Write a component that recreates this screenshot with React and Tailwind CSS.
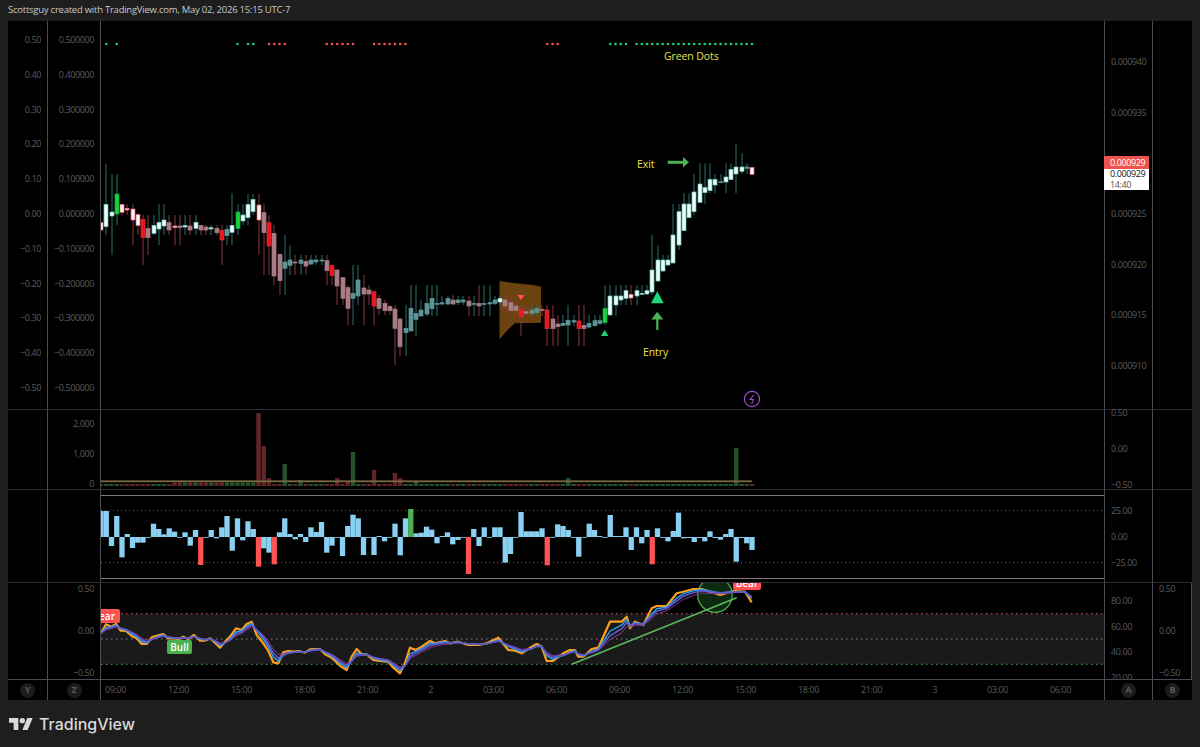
import React from 'react';

const FONT = { fontFamily: '"Open Sans", "Liberation Sans", sans-serif' };

// kind, body top, body bottom, wick top, wick bottom (3x crop coords, converted below)
const SEG_A = [
  ['p',188,210,188,210],['w',133,200,12,225],['w',156,168,42,285],['g',102,162,42,195],['p',133,157,133,165],
  ['p',145,150,133,165],['p',147,180,133,255],['p',163,197,163,225],['r',178,233,165,315],['m',205,233,165,285],
  ['w',196,220,165,225],['w',187,207,133,255],['w',180,198,133,225],['m',188,210,165,225],['p',198,203,165,255],
  ['m',198,203,165,255],['w',196,201,165,225],['m',198,210,165,225],['w',187,205,165,225],['m',196,210,195,225],
  ['m',201,210,195,225],['w',203,207,195,225],['m',205,218,195,225],['r',211,240,195,315],['t',208,227,195,255],
  ['w',196,217,100,255],['g',156,205,133,225],['w',165,183,133,195],['w',133,173,102,195],['w',118,155,102,165],
  ['p',135,180,102,285],['m',158,218,133,345],['r',188,258,165,345],['m',220,348,195,375],['m',283,362,283,405],
  ['t',306,325,225,405],['t',300,316,255,345],['m',306,309,285,345],['t',300,310,285,345],['m',304,318,285,345],
  ['t',300,312,285,315],['t',300,306,285,315],['t',300,303,285,315],['m',302,332,285,375],['r',316,347,316,375],
  ['m',330,378,330,435],['m',353,415,353,435],['m',383,445,375,495],['t',400,415,315,495],['t',360,408,315,435],
  ['m',384,402,345,495],['m',390,402,375,435],['r',395,438,395,495],['m',416,445,405,465],['m',430,452,420,465],
  ['m',440,452,435,465],['m',447,505,435,615],
];
const SEG_B = [
  ['m',207,290,207,318],['t',235,248,165,318],['t',175,243,105,243],['t',190,208,105,258],['t',180,198,150,198],
  ['t',160,192,105,198],['t',145,176,105,198],['t',160,162,105,198],['t',158,162,138,165],['t',145,162,138,165],
  ['m',150,162,135,165],['t',150,158,138,165],['t',150,156,138,165],['m',153,168,138,198],['t',160,162,138,198],
  ['m',160,168,105,198],['t',160,162,105,198],['t',158,162,105,198],['t',150,160,138,165],['w',145,156,138,165],
  ['m',150,168,138,198],['m',158,182,138,198],['m',168,182,150,198],['r',178,200,165,258],['m',185,190,165,198],
  ['t',180,190,165,198],['t',175,188,165,198],['m',178,180,165,198],['r',180,236,165,288],['m',207,236,165,288],
  ['m',222,230,195,288],['t',220,226,195,228],['t',211,225,165,288],['t',212,216,195,228],['r',213,236,165,288],
  ['m',226,236,165,288],['t',220,231,195,235],['t',212,227,195,230],['t',212,220,195,225],['g',175,218,105,225],
  ['w',138,195,105,195],['w',138,165,105,198],['w',138,150,105,165],['w',122,145,105,165],['p',133,144,105,165],
  ['w',122,138,105,165],['w',130,132,105,135],['w',122,132,105,135],
];
const SEG_C = [
  ['w',720,786,615,795],['w',690,753,645,756],['w',690,723,675,726],['w',690,705,675,708],['w',615,699,522,699],
  ['w',545,645,522,660],['w',522,602,490,602],['w',522,563,490,563],['w',486,545,432,555],['w',462,517,400,517],
  ['w',472,488,400,522],['w',448,482,400,490],['w',448,465,432,490],['t',455,458,432,460],['w',441,456,400,490],
  ['w',418,449,400,449],['w',411,432,340,490],['w',411,424,370,432],['t',411,415,400,432],['p',412,433,412,433],
];
const toAbs = (seg, off) => seg.map(([k, a, b, c, d]) => [k, a / 3 + off, b / 3 + off, c / 3 + off, d / 3 + off]);
const CANDLES = [...toAbs(SEG_A, 160), ...toAbs(SEG_B, 250), ...toAbs(SEG_C, 30)];

const candleX = (i) => 101 + 5.25 * i;

const BODY = {
  w: 'fill-[#eafffa] stroke-[#6fc0b0]',
  p: 'fill-[#fff5f5] stroke-[#e0606c]',
  r: 'fill-[#f2121c] stroke-[#c8343c]',
  g: 'fill-[#17d43c] stroke-[#17a83c]',
  m: 'fill-[#a87c84] stroke-[#a87c84]',
  t: 'fill-[#5c9498] stroke-[#5c9498]',
};

const GREEN_DOTS = [1, 3, 26, 28, 29, 97, 98, 99, 100];
for (let i = 102; i <= 124; i++) GREEN_DOTS.push(i);
const RED_DOTS = [32, 33, 34, 35, 43, 44, 45, 46, 47, 48, 52, 53, 54, 55, 56, 57, 58, 85, 86, 87];

const VOL_BIG = {
  30: 413, 31: 446, 32: 478, 35: 464, 38: 480, 45: 478, 47: 481, 48: 452, 52: 470, 56: 473, 57: 478,
  60: 481, 89: 478, 121: 448,
};

const OSC = [
  333,333,438,348,472,402,444,428,428,411,371,387,403,385,395,411,397,437,390,495,411,390,415,382,348,452,355,421,364,387,
  500,445,458,493,397,355,402,418,402,426,382,396,366,458,437,411,468,378,344,355,465,411,465,408,424,411,371,466,355,327,
  400,398,380,389,430,408,397,433,420,411,522,387,438,382,411,382,382,488,462,411,336,394,394,394,385,496,411,373,378,390,
  411,470,411,371,390,408,411,345,408,408,382,450,382,430,390,493,385,411,424,393,338,415,414,426,414,424,394,414,419,402,
  387,485,414,430,450,
];
const OSC_RED = [19, 30, 33, 70, 85, 105];
const OSC_GREEN = [59];

const ORANGE_A = [
  [303,175],[318,148],[333,155],[348,147],[362,167],[378,168],[395,183],[410,190],[425,207],[440,207],[455,187],[470,182],
  [490,177],[505,190],[520,190],[536,192],[550,185],[565,192],[582,180],[600,197],[615,197],[630,190],[645,203],[660,218],
  [675,200],[690,185],[708,160],[725,165],[740,147],[755,140],[770,180],[790,205],[805,228],[820,262],[835,265],[850,232],
  [865,228],[880,230],[897,228],[915,233],[930,223],[945,222],[960,222],[975,238],[990,245],[1005,257],[1020,272],[1040,285],
  [1055,245],[1070,222],[1085,238],[1100,238],[1120,255],[1140,258],[1165,260],[1180,278],
];
const ORANGE_B = [
  [0,295],[15,265],[30,218],[47,225],[65,215],[90,198],[105,205],[135,198],[150,205],[175,200],[205,210],[235,210],[260,205],
  [295,188],[325,225],[345,227],[365,235],[395,215],[410,207],[425,215],[440,258],[458,258],[490,235],[510,225],[525,225],
  [535,245],[550,245],[575,222],[595,218],[630,140],[665,140],[680,125],[690,160],[705,140],[730,150],[755,100],[770,93],
  [800,93],[830,55],[850,50],[880,42],[905,42],[960,60],[1000,48],[1035,50],[1055,82],
];
const ORANGE = [
  ...ORANGE_A.map(([x, y]) => [x / 3, y / 3 + 575]),
  ...ORANGE_B.map(([x, y]) => [x / 3 + 400, y / 3 + 575]),
];

const ema = (pts, a) => {
  let prev = pts[0][1];
  return pts.map(([x, y]) => {
    prev = prev + a * (y - prev);
    return [x, prev];
  });
};
const toLine = (pts) => pts.map(([x, y]) => `${x.toFixed(1)},${y.toFixed(1)}`).join(' ');

const TIMES = ['09:00', '12:00', '15:00', '18:00', '21:00', '2', '03:00', '06:00', '09:00', '12:00', '15:00', '18:00', '21:00', '3', '03:00', '06:00'];

const Row = ({ className, cols }) => (
  <div className={`grid grid-cols-[40px_53px_1004px_48px_39px] border-b ${className}`}>
    {cols}
  </div>
);

const Toggle = ({ label }) => (
  <span className="flex h-[15px] w-[15px] items-center justify-center rounded-full bg-[#1c1c1c] text-[9px] font-bold text-[#5a5a5a]">
    {label}
  </span>
);

const MainChart = () => (
  <svg viewBox="101 21 1003 388" className="block h-[388px] w-[1003px]">
    <polygon points="499.5,281 513,283 533,285 541,286.7 541,322.7 515,323.3 508.3,329.3 499.5,339.3" className="fill-[#6b430f]" />
    {GREEN_DOTS.map((i) => (
      <circle key={`g${i}`} cx={candleX(i)} cy={44} r={1.3} className="fill-[#1fce7c]" />
    ))}
    {RED_DOTS.map((i) => (
      <circle key={`r${i}`} cx={candleX(i)} cy={44} r={1.3} className="fill-[#f0525a]" />
    ))}
    {CANDLES.map(([k, top, bot, wt, wb], i) => {
      const up = k === 'w' || k === 't' || k === 'g';
      const x = Math.round(candleX(i));
      return (
        <g key={i}>
          <rect x={x - 0.5} y={wt} width={1} height={wb - wt} className={up ? 'fill-[#27706a]' : 'fill-[#8a3640]'} />
          <rect x={x - 2} y={top} width={4} height={Math.max(bot - top, 1)} strokeWidth={0.7} className={BODY[k]} />
        </g>
      );
    })}
    <polygon points="517.3,295 524.7,295 521,300" className="fill-[#ff5252]" />
    <polygon points="604.6,330 601,336 608.3,336" className="fill-[#1ed67f]" />
    <polygon points="657.3,291.3 651,303.3 663.7,303.3" className="fill-[#1ed67f]" />
    <path d="M657.3 330V315M653.5 318.5l3.8-5 3.8 5z" fill="#4caf50" stroke="#4caf50" strokeWidth="2.2" />
    <path d="M667.7 162.3H684" fill="none" stroke="#4caf50" strokeWidth="3" />
    <path d="M683 157l6 5.3-6 5.3z" fill="#4caf50" />
    <circle cx="752" cy="399" r="7.6" fill="none" stroke="#9c4dcc" strokeWidth="1.2" />
    <path d="M754 394.5l-3.8 5h3.4l-2 4.2" fill="none" stroke="#9c4dcc" strokeWidth="1.1" />
  </svg>
);

const VolumeChart = () => (
  <svg viewBox="101 410 1003 79" className="block h-[79px] w-[1003px]">
    {CANDLES.map(([k], i) => {
      const up = k === 'w' || k === 't' || k === 'g';
      const top = VOL_BIG[i] ?? (i >= 14 && i <= 29 ? 482.5 : 484);
      return (
        <rect key={i} x={candleX(i) - 2.2} y={top} width={4.4} height={486 - top} className={up ? 'fill-[#24502a]' : 'fill-[#622526]'} />
      );
    })}
    <rect x="101" y="480.4" width="651" height="1.8" className="fill-[#7a6a42]" />
  </svg>
);

const OscChart = () => (
  <svg viewBox="101 490 1003 92" className="block h-[92px] w-[1003px]">
    <rect x="101" y="495" width="1003" height="1" className="fill-[#7d7d7d]" />
    <rect x="101" y="578" width="1003" height="1" className="fill-[#7d7d7d]" />
    <line x1="101" x2="1104" y1="510.7" y2="510.7" stroke="#6c6c6c" strokeDasharray="1 3" />
    <line x1="101" x2="1104" y1="562.7" y2="562.7" stroke="#6c6c6c" strokeDasharray="1 3" />
    {OSC.map((v, i) => {
      const y = v / 3 + 400;
      const zero = 537;
      const fill = OSC_RED.includes(i) ? 'fill-[#ff5252]' : OSC_GREEN.includes(i) ? 'fill-[#4caf50]' : 'fill-[#8ad0f2]';
      return (
        <rect key={i} x={candleX(i) - 2.65} y={Math.min(y, zero)} width={5.3} height={Math.max(Math.abs(y - zero), 0.8)} className={fill} />
      );
    })}
  </svg>
);

const RsiChart = () => (
  <svg viewBox="101 583 1003 96" className="block h-[96px] w-[1003px]">
    <rect x="101" y="613.7" width="1003" height="50.6" className="fill-[#1a1a1a]" />
    <line x1="101" x2="1104" y1="613.7" y2="613.7" stroke="#f0525a" strokeDasharray="1.5 3.5" />
    <line x1="101" x2="1104" y1="639" y2="639" stroke="#8a8a8a" strokeDasharray="1.5 3.5" />
    <line x1="101" x2="1104" y1="664.3" y2="664.3" stroke="#4caf50" strokeDasharray="1.5 3.5" />
    <circle cx="715" cy="595" r="17.3" fill="#0c2a10" stroke="#4caf50" strokeWidth="1.2" />
    <line x1="571.7" y1="664.3" x2="736.7" y2="597.7" stroke="#5cb85c" strokeWidth="1.5" />
    <polyline points={toLine(ORANGE)} fill="none" stroke="#ff9f1a" strokeWidth="2.2" strokeLinejoin="round" />
    <polyline points={toLine(ema(ORANGE, 0.65))} fill="none" stroke="#2f9cf0" strokeWidth="1.5" />
    <polyline points={toLine(ema(ORANGE, 0.38))} fill="none" stroke="#8a2fa0" strokeWidth="1" />
    <polyline points={toLine(ema(ORANGE, 0.5))} fill="none" stroke="#5c5cc8" strokeWidth="1.6" />
  </svg>
);

const axisText = 'text-[9px] leading-3 tracking-[-0.4px] text-[#5c5c5c]';
const leftCell = 'flex flex-col items-end border-r border-[#4a4a52] pr-[6px] overflow-hidden';
const rightCell = 'flex flex-col border-r border-[#4a4a52] pl-[6px] overflow-hidden';
const noteText = 'absolute text-[10.5px] leading-3 tracking-[-0.1px] text-[#ebe04f]';

const Labels = ({ items }) => items.map((t, i) => (t ? <span key={i} className={axisText}>{t}</span> : <span key={i} className="h-3" />));

const App = () => (
  <div className="flex h-[747px] w-[1200px] flex-col overflow-hidden bg-[#1e1e1e]" style={FONT}>
    <div className="flex h-[21px] items-center pl-2 text-[9.5px] tracking-[-0.24px] text-[#c9c9c9]">
      Scottsguy created with TradingView.com, May 02, 2026 15:15 UTC-7
    </div>

    <div className="mx-2 flex h-[679px] flex-col bg-black">
      <Row
        className="h-[389px] border-[#2c2c36]"
        cols={
          <>
            <div className={`${leftCell} justify-between pt-[13px] pb-[15px]`}>
              <Labels items={['0.50', '0.40', '0.30', '0.20', '0.10', '0.00', '−0.10', '−0.20', '−0.30', '−0.40', '−0.50']} />
            </div>
            <div className={`${leftCell} justify-between pt-[13px] pb-[15px]`}>
              <Labels items={['0.500000', '0.400000', '0.300000', '0.200000', '0.100000', '0.000000', '−0.100000', '−0.200000', '−0.300000', '−0.400000', '−0.500000']} />
            </div>
            <div className="relative border-r border-[#4a4a52]">
              <MainChart />
              <span className={`${noteText} left-[563px] top-[29px]`}>Green Dots</span>
              <span className={`${noteText} left-[536px] top-[137px]`}>Exit</span>
              <span className={`${noteText} left-[542px] top-[325px]`}>Entry</span>
            </div>
            <div className="relative border-r border-[#4a4a52]">
              <div className="flex h-full flex-col justify-between pt-[35px] pb-[37px] pl-[6px]">
                <Labels items={['0.000940', '0.000935', '', '0.000925', '0.000920', '0.000915', '0.000910']} />
              </div>
              <div className="absolute -left-px top-[135px] w-[45px]">
                <div className="flex h-[13px] items-center bg-[#ef5350] pl-[6px] text-[9px] tracking-[-0.4px] text-white">0.000929</div>
                <div className="flex h-[21px] flex-col justify-center bg-white pl-[6px] text-[9px] leading-[10.5px] tracking-[-0.4px] text-[#111]">
                  <span>0.000929</span>
                  <span className="text-[#555]">14:40</span>
                </div>
              </div>
            </div>
            <div />
          </>
        }
      />

      <Row
        className="h-[80px] border-[#2c2c36]"
        cols={
          <>
            <div className="border-r border-[#4a4a52]" />
            <div className={`${leftCell} gap-[18px] pt-2`}>
              <Labels items={['2,000', '1,000', '0']} />
            </div>
            <div className="border-r border-[#4a4a52]">
              <VolumeChart />
            </div>
            <div className="flex flex-col border-r border-[#4a4a52] pl-[6px]">
              <div className="-mt-[3px] flex flex-col gap-6">
                <Labels items={['0.50', '0.00', '−0.50']} />
              </div>
            </div>
            <div />
          </>
        }
      />

      <Row
        className="h-[93px] border-[#2c2c36]"
        cols={
          <>
            <div className="border-r border-[#4a4a52]" />
            <div className="border-r border-[#4a4a52]" />
            <div className="border-r border-[#4a4a52]">
              <OscChart />
            </div>
            <div className={`${rightCell} gap-[14px] pt-[15px]`}>
              <Labels items={['25.00', '0.00', '−25.00']} />
            </div>
            <div />
          </>
        }
      />

      <Row
        className="h-[97px] border-[#48484e]"
        cols={
          <>
            <div className="border-r border-[#4a4a52]" />
            <div className={`${leftCell} gap-[30px]`}>
              <Labels items={['0.50', '0.00', '−0.50']} />
            </div>
            <div className="relative overflow-hidden border-r border-[#4a4a52]">
              <RsiChart />
              <span className="absolute left-[-12px] top-[26px] h-[14px] w-[31px] rounded-[2px] bg-[#ff5252] pr-[5px] text-right text-[10px] font-semibold leading-[14px] text-white">Bear</span>
              <span className="absolute left-[66px] top-[57px] h-[14px] w-[25px] rounded-[2px] bg-[#4caf50] text-center text-[10px] font-semibold leading-[14px] text-white">Bull</span>
              <span className="absolute left-[632px] top-[-7px] h-[14px] w-[28px] rounded-[2px] bg-[#ff5252] text-center text-[10px] font-semibold leading-[14px] text-white">Bear</span>
            </div>
            <div className={`${rightCell} gap-[13.6px] pt-3`}>
              <Labels items={['80.00', '60.00', '40.00', '20.00']} />
            </div>
            <div className={`${rightCell} gap-[30px]`}>
              <Labels items={['0.50', '0.00', '−0.50']} />
            </div>
          </>
        }
      />

      <div className="grid h-5 grid-cols-[40px_53px_1004px_48px_39px]">
        <div className="flex items-center justify-center border-r border-[#4a4a52]"><Toggle label="Y" /></div>
        <div className="flex items-center justify-center border-r border-[#4a4a52]"><Toggle label="Z" /></div>
        <div className="flex items-center overflow-hidden border-r border-[#4a4a52]">
          {TIMES.map((t, i) => (
            <span key={i} className={`w-[63px] shrink-0 text-center ${axisText} ${i === 0 ? '-ml-[17px]' : ''}`}>{t}</span>
          ))}
        </div>
        <div className="flex items-center justify-center border-r border-[#4a4a52]"><Toggle label="A" /></div>
        <div className="flex items-center justify-center"><Toggle label="B" /></div>
      </div>
    </div>

    <div className="flex flex-1 items-center gap-[6px] pl-[9px]">
      <svg viewBox="0 4 36 18" className="h-[12px] w-[24px] fill-[#d9d9d9]">
        <path d="M14 22H7V11H0V4h14v18zM28 22h-8l7.5-18h8L28 22z" />
        <circle cx="20" cy="8" r="4" />
      </svg>
      <span className="text-[16px] font-medium leading-none text-[#d9d9d9]" style={{ fontFamily: 'Inter, sans-serif' }}>TradingView</span>
    </div>
  </div>
);

export default App;
